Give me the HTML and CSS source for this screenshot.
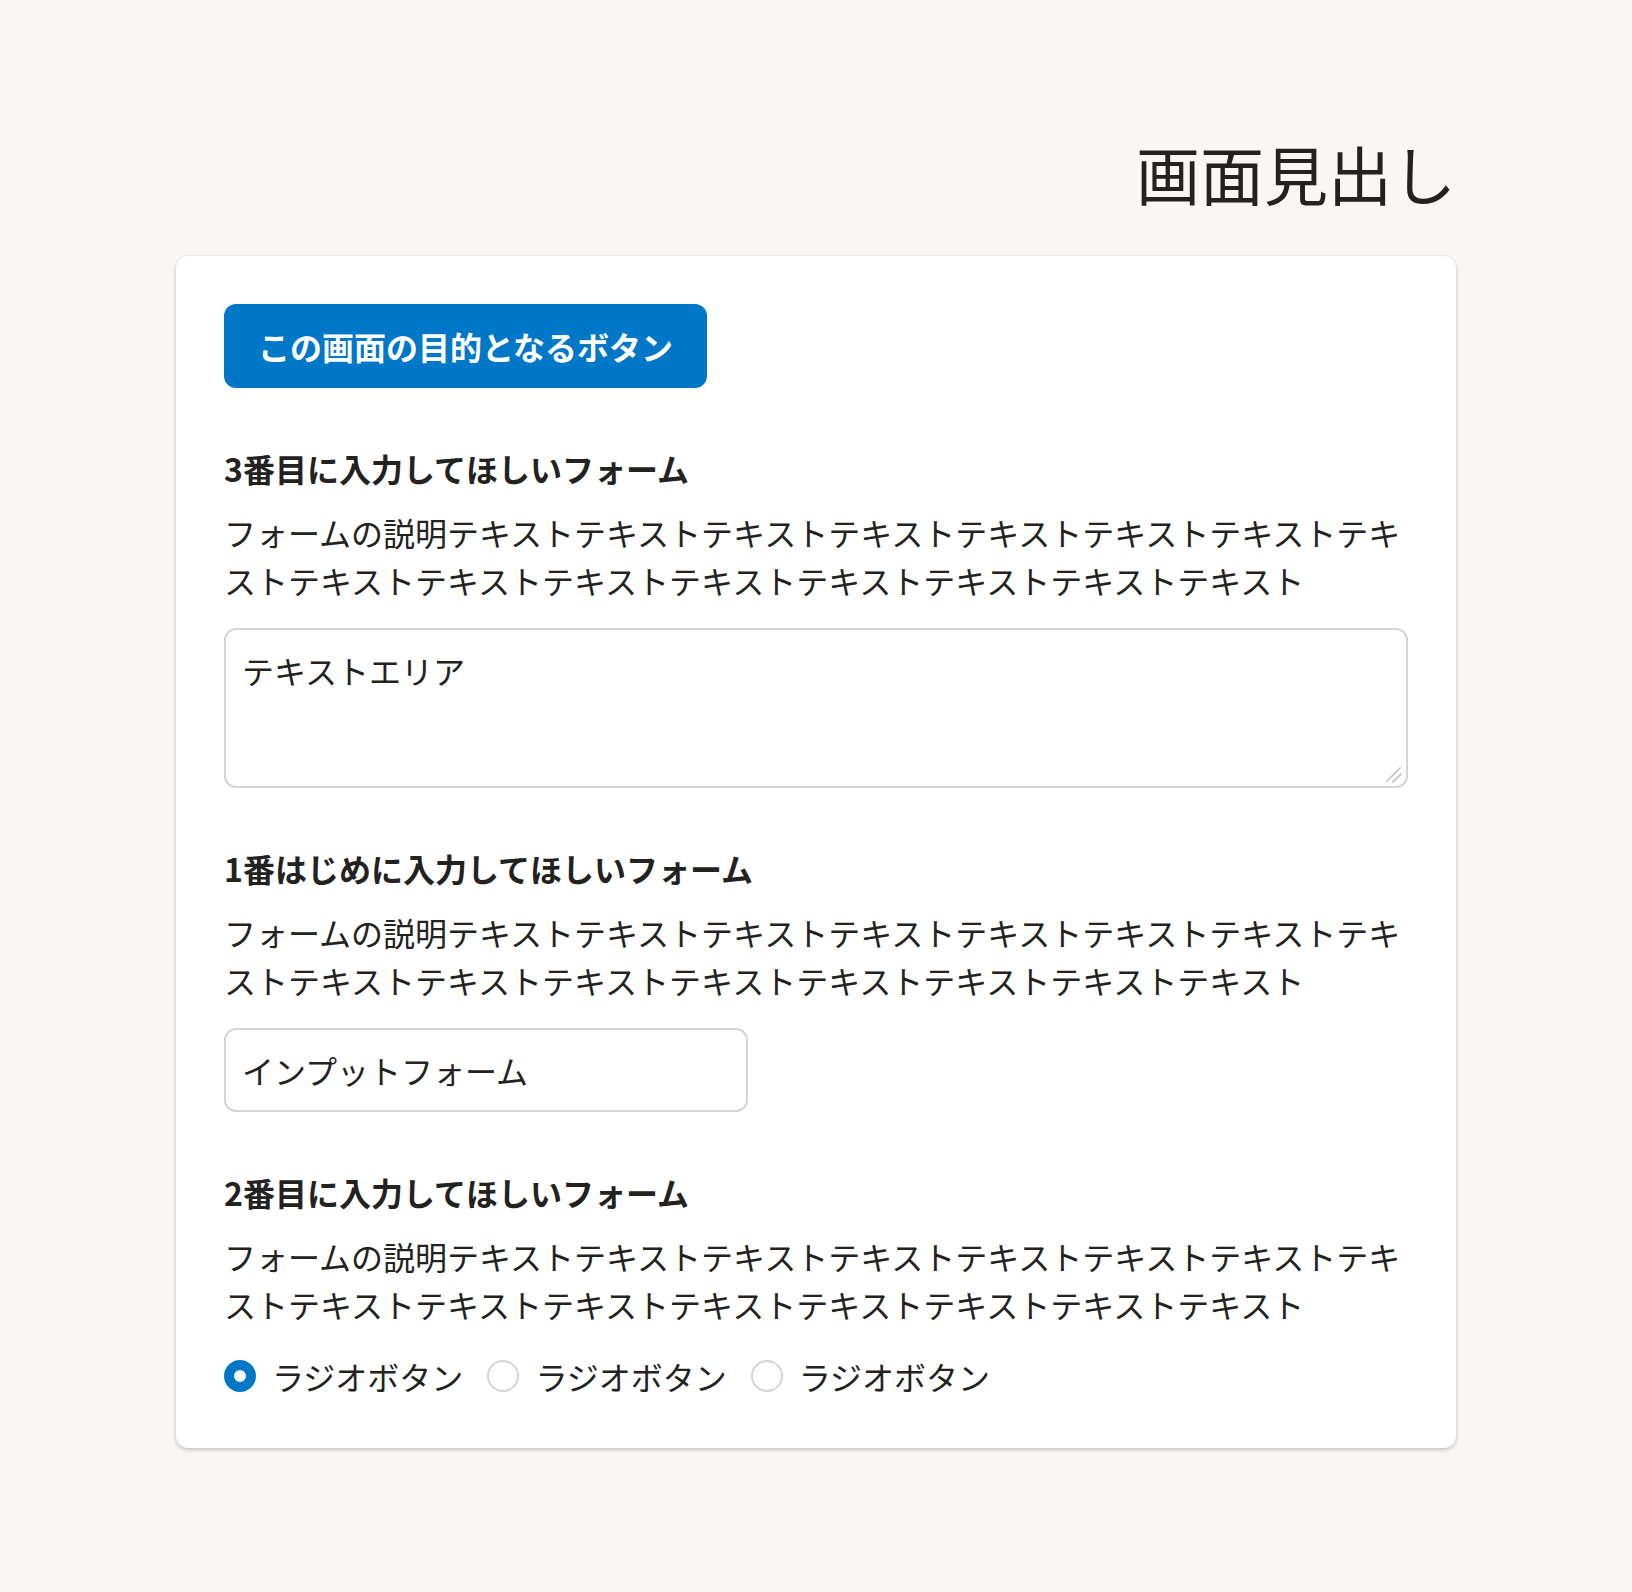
FILE: index.html
```html
<!DOCTYPE html>
<html lang="ja">
<head>
<meta charset="utf-8">
<title>画面見出し</title>
<link rel="stylesheet" href="styles.css">
</head>
<body>
<div class="page">
  <h1 class="page-title">画面見出し</h1>
  <div class="card">
    <button class="primary-btn" type="button">この画面の目的となるボタン</button>

    <section class="field">
      <h2 class="field-title">3番目に入力してほしいフォーム</h2>
      <p class="field-desc">フォームの説明テキストテキストテキストテキストテキストテキストテキストテキストテキストテキストテキストテキストテキストテキストテキストテキスト</p>
      <div class="textarea-wrap">
        <textarea class="textarea">テキストエリア</textarea>
        <svg class="resize-handle" width="16" height="16" viewBox="0 0 16 16" aria-hidden="true">
          <path d="M1 14 L14 1 M7 15 L15 7" stroke="#cfcbc8" stroke-width="2" stroke-linecap="round" fill="none"/>
        </svg>
      </div>
    </section>

    <section class="field">
      <h2 class="field-title">1番はじめに入力してほしいフォーム</h2>
      <p class="field-desc">フォームの説明テキストテキストテキストテキストテキストテキストテキストテキストテキストテキストテキストテキストテキストテキストテキストテキスト</p>
      <input class="input" type="text" value="インプットフォーム">
    </section>

    <section class="field">
      <h2 class="field-title">2番目に入力してほしいフォーム</h2>
      <p class="field-desc">フォームの説明テキストテキストテキストテキストテキストテキストテキストテキストテキストテキストテキストテキストテキストテキストテキストテキスト</p>
      <div class="radios">
        <label class="radio"><input type="radio" name="r" checked><span>ラジオボタン</span></label>
        <label class="radio"><input type="radio" name="r"><span>ラジオボタン</span></label>
        <label class="radio"><input type="radio" name="r"><span>ラジオボタン</span></label>
      </div>
    </section>
  </div>
</div>
</body>
</html>
```

FILE: styles.css
```css
html, body {
  margin: 0;
  padding: 0;
}

body {
  background: #f8f7f6;
  color: #23221f;
  font-family: "Noto Sans CJK JP", "Noto Sans", sans-serif;
  font-size: 32px;
  line-height: 48px;
}

.page {
  width: 1280px;
  margin: 0 auto;
  padding: 124px 0 144px;
}

.page-title {
  margin: 0 0 36px;
  font-size: 64px;
  line-height: 96px;
  font-weight: 400;
  text-align: right;
}

.card {
  background: #ffffff;
  border-radius: 12px;
  padding: 48px;
  box-shadow: 0 2px 4px rgba(0, 0, 0, 0.2), 0 0 2px rgba(0, 0, 0, 0.08);
}

.primary-btn {
  display: block;
  margin: 0;
  padding: 16px 32px;
  border: 2px solid #0077c7;
  border-radius: 12px;
  background: #0077c7;
  color: #ffffff;
  font-family: inherit;
  font-size: 32px;
  line-height: 48px;
  font-weight: 700;
  cursor: pointer;
}

.field {
  margin-top: 56px;
}

.field-title {
  margin: 0;
  font-size: 32px;
  line-height: 48px;
  font-weight: 700;
}

.field-desc {
  margin: 16px 0 24px;
  font-size: 32px;
  line-height: 48px;
}

.textarea-wrap {
  position: relative;
}

.textarea {
  display: block;
  box-sizing: border-box;
  width: 100%;
  height: 160px;
  margin: 0;
  padding: 16px;
  border: 2px solid #d6d3d0;
  border-radius: 12px;
  background: #ffffff;
  color: #23221f;
  font-family: inherit;
  font-size: 32px;
  line-height: 48px;
  resize: none;
  outline: none;
}

.resize-handle {
  position: absolute;
  right: 6px;
  bottom: 5px;
  pointer-events: none;
}

.input {
  display: block;
  box-sizing: border-box;
  width: 524px;
  height: 84px;
  margin: 0;
  padding: 16px;
  border: 2px solid #d6d3d0;
  border-radius: 12px;
  background: #ffffff;
  color: #23221f;
  font-family: inherit;
  font-size: 32px;
  line-height: 48px;
  outline: none;
}

.radios {
  display: flex;
  gap: 24px;
}

.radio {
  display: flex;
  align-items: center;
  gap: 16px;
  line-height: 48px;
  cursor: pointer;
}

.radio input {
  appearance: none;
  -webkit-appearance: none;
  box-sizing: border-box;
  width: 32px;
  height: 32px;
  margin: 0;
  border: 2px solid #d6d3d0;
  border-radius: 50%;
  background: #ffffff;
  flex: none;
}

.radio input:checked {
  border: 10px solid #0077c7;
}
```
